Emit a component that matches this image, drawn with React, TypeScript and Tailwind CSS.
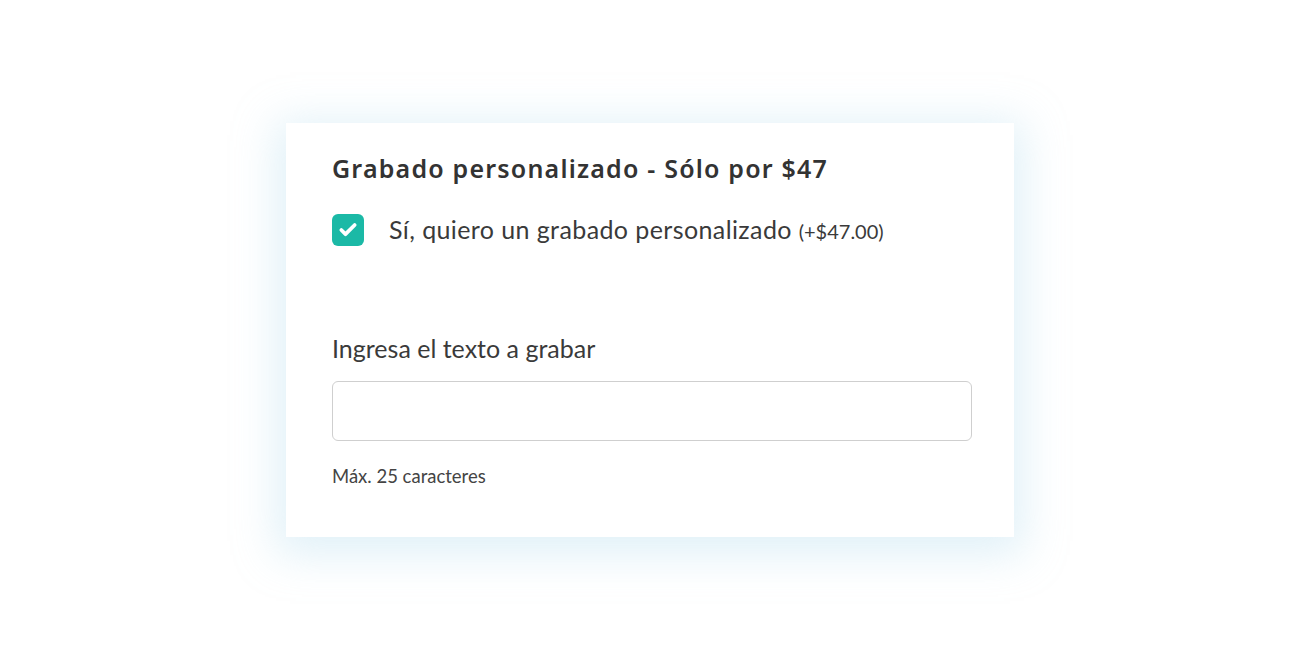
import { Check } from 'lucide-react'

export default function App() {
  return (
    <div className="flex h-[659px] w-full items-start justify-center bg-white pt-[123px]">
      <div className="flex w-[728px] flex-col bg-white px-[46px] pb-[49px] pt-[28px] shadow-[0_8px_40px_10px_rgba(170,215,235,0.35)]">
        <h2 className="text-[25px] font-semibold leading-[34px] tracking-[1.2px] text-[#333333] [font-family:'Noto_Sans',sans-serif]">
          Grabado personalizado - Sólo por $47
        </h2>

        <label className="mt-[28px] flex items-center gap-[25px] [font-family:Lato,sans-serif] text-[#3a3a3a]">
          <span className="flex h-[32px] w-[32px] items-center justify-center rounded-[6px] bg-[#1bb9a6]">
            <Check className="h-[20px] w-[20px] text-white" strokeWidth={4.5} />
          </span>
          <span className="text-[25px] leading-[32px] tracking-[0.4px]">
            Sí, quiero un grabado personalizado <span className="text-[20px] tracking-normal">(+$47.00)</span>
          </span>
        </label>

        <div className="mt-[85px] [font-family:Lato,sans-serif] text-[25px] leading-[32px] text-[#3a3a3a]">
          Ingresa el texto a grabar
        </div>

        <input
          type="text"
          className="mt-[17px] h-[60px] w-[640px] rounded-[6px] border border-[#cfcfcf] bg-white px-4 outline-none"
        />

        <div className="mt-[23px] [font-family:Lato,sans-serif] text-[18.5px] leading-[24px] text-[#444444]">
          Máx. 25 caracteres
        </div>
      </div>
    </div>
  )
}
